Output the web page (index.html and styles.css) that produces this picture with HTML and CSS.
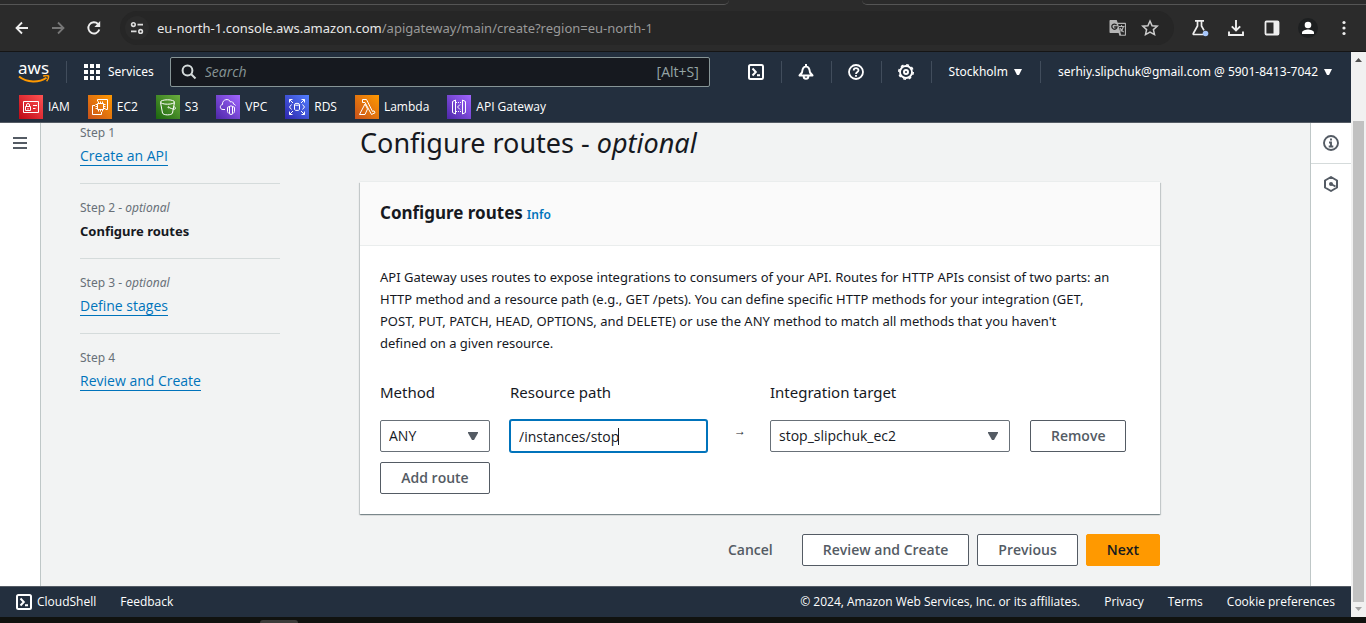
FILE: index.html
```html
<!DOCTYPE html>
<html lang="en">
<head>
<meta charset="utf-8">
<title>API Gateway - Create API</title>
<link rel="stylesheet" href="styles.css">
</head>
<body>
<div class="window">
  <div class="tabstrip">
    <div class="tabstrip-left"></div>
    <div class="tabstrip-right"></div>
  </div>
  <div class="toolbar">
    <div class="toolbar-nav">
      <button class="tool" aria-label="Back"><svg width="16" height="16" viewBox="0 0 16 16"><path d="M14 8H3M8 2.5 2.5 8 8 13.5" fill="none" stroke="#eee" stroke-width="1.8"/></svg></button>
      <button class="tool" aria-label="Forward"><svg width="16" height="16" viewBox="0 0 16 16"><path d="M2 8h11M8 2.5 13.5 8 8 13.5" fill="none" stroke="#777" stroke-width="1.8"/></svg></button>
      <button class="tool" aria-label="Reload"><svg width="16" height="16" viewBox="0 0 16 16"><path d="M13.3 9.5A5.6 5.6 0 1 1 12 4" fill="none" stroke="#eee" stroke-width="1.9"/><path d="M14.2 1v6H8.4z" fill="#eee"/></svg></button>
    </div>
    <div class="omnibox">
      <span class="site-info"><svg width="14" height="14" viewBox="0 0 14 14" fill="none" stroke="#ddd" stroke-width="1.6"><circle cx="3.4" cy="3.6" r="1.8"/><path d="M7.5 3.6H13M1 10.4h5.5"/><circle cx="10.6" cy="10.4" r="1.8"/></svg></span>
      <div class="url">eu-north-1.console.aws.amazon.com<span class="url-path">/apigateway/main/create?region=eu-north-1</span></div>
      <button class="tool" aria-label="Translate"><svg width="18" height="18" viewBox="0 0 18 18"><path d="M1.5 1h6.2l1 2.8H16c.6 0 1 .4 1 1v11c0 .6-.4 1-1 1h-5.6L9.600 14H1.500c-.6 0-1-.4-1-1V2c0-.6.4-1 1-1z" fill="#b4b4b4"/><path d="m9.100 5 3 10.700h3.800V5z" fill="#262626"/><path d="M7.600 6.200A2.600 2.600 0 1 0 8 8H5.200" fill="none" stroke="#262626" stroke-width="1.300"/><path d="M10 7.500h5.500M12.500 6v1.500M14.500 7.500c-.5 2-1.700 3.700-3.200 4.800M11 9c.8 1.700 2 3 3.700 4" fill="none" stroke="#b4b4b4" stroke-width="1.100"/></svg></button>
      <button class="tool" aria-label="Bookmark"><svg width="18" height="18" viewBox="0 0 18 18"><path d="m9 2 2.100 4.700 5.100.5-3.800 3.400 1.100 5L9 13l-4.500 2.600 1.100-5L1.800 7.200l5.100-.5z" fill="none" stroke="#ccc" stroke-width="1.500"/></svg></button>
    </div>
    <div class="toolbar-actions">
      <button class="tool" aria-label="Labs"><svg width="18" height="18" viewBox="0 0 18 18"><path d="M4 1.800h9M6.500 2v5L2.300 14.500c-.3.600 0 1 .600 1H12M10.500 2v5l2.500 4.400" fill="none" stroke="#eee" stroke-width="1.700"/><circle cx="14.500" cy="14.500" r="2.800" fill="#a8c7fa"/></svg></button>
      <button class="tool" aria-label="Downloads"><svg width="18" height="18" viewBox="0 0 18 18" fill="none" stroke="#eee" stroke-width="1.900"><path d="M9 1v10.500M4.800 7.300 9 11.500l4.200-4.200M2 12.500V16h14v-3.500"/></svg></button>
      <button class="tool" aria-label="Side panel"><svg width="18" height="18" viewBox="0 0 18 18"><rect x="2.500" y="2.500" width="13" height="13" rx="1" fill="none" stroke="#eee" stroke-width="1.800"/><path d="M10.500 2h5v14h-5z" fill="#eee"/></svg></button>
      <button class="tool" aria-label="Profile"><svg width="20" height="20" viewBox="0 0 20 20"><circle cx="10" cy="10" r="10" fill="#1d1f20"/><circle cx="10" cy="7" r="3.300" fill="#fff"/><path d="M4 16v-1.500C4 12.500 8 11.500 10 11.500s6 1 6 3V16z" fill="#fff"/></svg></button>
      <button class="tool" aria-label="Menu"><svg width="18" height="18" viewBox="0 0 18 18" fill="#eee"><circle cx="9" cy="3.500" r="1.600"/><circle cx="9" cy="9" r="1.600"/><circle cx="9" cy="14.500" r="1.600"/></svg></button>
    </div>
  </div>

  <div class="viewport">
    <div class="console">
      <header class="header">
        <div class="header-top">
          <a class="logo" href="#" aria-label="AWS home"><span class="logo-text">aws</span><svg width="32" height="8" viewBox="0 0 32 8"><path d="M1 1.500c8 6.400 20 6.400 27.500 1.200" fill="none" stroke="#f90" stroke-width="2"/><path d="M25.200 1.200c2-.8 4.200-.8 5.300-.2.300 1.600-.500 3.700-1.900 5.200" fill="none" stroke="#f90" stroke-width="1.500"/></svg></a>
          <button class="services"><svg width="16" height="16" viewBox="0 0 16 16" fill="#fff"><path d="M0 0h4v4H0zM6 0h4v4H6zM12 0h4v4h-4zM0 6h4v4H0zM6 6h4v4H6zM12 6h4v4h-4zM0 12h4v4H0zM6 12h4v4H6zM12 12h4v4h-4z"/></svg>Services</button>
          <label class="search">
            <svg width="16" height="16" viewBox="0 0 16 16" fill="none" stroke="#d5dbdb" stroke-width="2"><circle cx="6.500" cy="6.500" r="4.900"/><path d="m10 10 4.500 4.500"/></svg>
            <input class="search-input" type="text" placeholder="Search" aria-label="Search">
            <span class="search-key">[Alt+S]</span>
          </label>
          <div class="header-tools">
            <button class="header-icon" aria-label="CloudShell"><svg width="16" height="16" viewBox="0 0 16 16" fill="none" stroke="#fff" stroke-width="2"><rect x="1" y="1" width="14" height="14" rx="1.500"/><path d="m4.500 4.500 3.300 3.500-3.300 3.500M9 11.200h3"/></svg></button>
            <button class="header-icon" aria-label="Notifications"><svg width="16" height="16" viewBox="0 0 16 16" fill="none" stroke="#fff" stroke-width="2" stroke-linejoin="round"><path d="M1.500 11.500h13L12 8.500C11.600 4.500 10.500 2.500 8 2.500S4.400 4.500 4 8.500zM8 0v2.500M5.700 11.500v1a2.300 2.300 0 0 0 4.600 0v-1"/></svg></button>
            <button class="header-icon" aria-label="Support"><svg width="16" height="16" viewBox="0 0 16 16" fill="none" stroke="#fff" stroke-width="1.800"><circle cx="8" cy="8" r="7"/><path d="M5.700 6.500C5.700 3.500 10.500 3.500 10.500 6.300 10.500 8 8 7.900 8 10M8 11v1.800"/></svg></button>
            <button class="header-icon" aria-label="Settings"><svg width="16" height="16" viewBox="0 0 16 16" fill="none" stroke="#fff"><circle cx="8" cy="8" r="6" stroke-width="1.800"/><circle cx="8" cy="8" r="7.200" stroke-width="1.600" stroke-dasharray="2.830 2.825"/><circle cx="8" cy="8" r="2" stroke-width="2"/></svg></button>
            <button class="header-menu">Stockholm<svg width="8" height="6" viewBox="0 0 8 6" fill="#fff"><path d="M0 0h8L5 6H3z"/></svg></button>
            <button class="header-menu">serhiy.slipchuk@gmail.com @ 5901-8413-7042<svg width="8" height="6" viewBox="0 0 8 6" fill="#fff"><path d="M0 0h8L5 6H3z"/></svg></button>
          </div>
        </div>
        <svg class="defs" width="0" height="0" aria-hidden="true"><defs>
          <linearGradient id="g-red" x1="0" y1="1" x2="1" y2="0"><stop stop-color="#bd0816"/><stop offset="1" stop-color="#ff5252"/></linearGradient>
          <linearGradient id="g-orange" x1="0" y1="1" x2="1" y2="0"><stop stop-color="#c8511b"/><stop offset="1" stop-color="#f90"/></linearGradient>
          <linearGradient id="g-green" x1="0" y1="1" x2="1" y2="0"><stop stop-color="#1b660f"/><stop offset="1" stop-color="#6cae3e"/></linearGradient>
          <linearGradient id="g-purple" x1="0" y1="1" x2="1" y2="0"><stop stop-color="#4d27a8"/><stop offset="1" stop-color="#a166ff"/></linearGradient>
          <linearGradient id="g-blue" x1="0" y1="1" x2="1" y2="0"><stop stop-color="#2e27ad"/><stop offset="1" stop-color="#527fff"/></linearGradient>
        </defs></svg>
        <nav class="favorites" aria-label="Favorites">
          <a class="favorite" href="#"><svg width="24" height="24" viewBox="0 0 24 24" fill="none" stroke="#fff"><path d="M0 0h24v24H0z" fill="url(#g-red)" stroke="none"/><path d="M4.500 6.500h15v11h-15zM6.500 11.500h5v4h-5zM7.500 11.500V10a1.500 1.500 0 0 1 3 0v1.500M9 13v1.500M14 10.500h4M14 13.500h2.500"/></svg>IAM</a>
          <a class="favorite" href="#"><svg width="24" height="24" viewBox="0 0 24 24" fill="none" stroke="#fff"><path d="M0 0h24v24H0z" fill="url(#g-orange)" stroke="none"/><path d="M9.500 8.500h6v6h-6zM10.500 6.500v2M12.500 6.500v2M14.500 6.500v2M10.500 14.500v2M12.500 14.500v2M14.500 14.500v2M7.500 9.500h2M7.500 11.500h2M7.500 13.500h2M15.500 9.500h2M15.500 11.500h2M15.500 13.500h2M9.500 6.500v-2h10v10h-2M7 10.500H4.500v9h9V17"/></svg>EC2</a>
          <a class="favorite" href="#"><svg width="24" height="24" viewBox="0 0 24 24" fill="none" stroke="#fff"><path d="M0 0h24v24H0z" fill="url(#g-green)" stroke="none"/><path d="M4.500 7.500 6.500 18c.5 2.500 9.500 2.500 10 0l2-10.500M13 12.500c3 1.500 6.500 2.500 6.500.8 0-.8-1-1.600-2-2"/><ellipse cx="11.500" cy="7" rx="7" ry="2.200"/><circle cx="12.500" cy="12.300" r=".6"/></svg>S3</a>
          <a class="favorite" href="#"><svg width="24" height="24" viewBox="0 0 24 24" fill="none" stroke="#fff"><path d="M0 0h24v24H0z" fill="url(#g-purple)" stroke="none"/><path d="M9 14.500H7C3.500 14.500 3.500 10 6.500 9.500 6 4 13 3 14.500 7c1.500-.8 3 .3 3 2 1 .2 1.800.8 2 1.500M11.500 12.300l3.500-1.500 3.500 1.500v4c0 1.500-2 2.700-3.500 3.200-1.500-.5-3.500-1.700-3.500-3.200zM13.500 12v6.500M16.500 12v6.500"/></svg>VPC</a>
          <a class="favorite" href="#"><svg width="24" height="24" viewBox="0 0 24 24" fill="none" stroke="#fff"><path d="M0 0h24v24H0z" fill="url(#g-blue)" stroke="none"/><path d="M4.500 7.500v-3h3M4.500 4.500 8 8M16.500 4.500h3v3M19.500 4.500 16 8M4.500 16.500v3h3M4.500 19.500 8 16M19.500 16.500v3h-3M19.500 19.500 16 16M9.500 9.500v5c0 1.300 5 1.300 5 0v-5M6.500 9.500l-2 2.500 2 2.500M17.500 9.500l2 2.500-2 2.500"/><ellipse cx="12" cy="9.300" rx="2.500" ry="1"/></svg>RDS</a>
          <a class="favorite" href="#"><svg width="24" height="24" viewBox="0 0 24 24" fill="none" stroke="#fff"><path d="M0 0h24v24H0z" fill="url(#g-orange)" stroke="none"/><path d="M4.500 19.500 10 9l2.500 5-2.500 5.500zM7.500 4.500h4l6 12 1.500-.7 1 2-3.500 1.700-6.500-12H7.500z"/></svg>Lambda</a>
          <a class="favorite" href="#"><svg width="24" height="24" viewBox="0 0 24 24" fill="none" stroke="#fff"><path d="M0 0h24v24H0z" fill="url(#g-purple)" stroke="none"/><path d="M5.500 6.500 8.500 5v14l-3-1.500zM18.500 6.500l-3-1.500v14l3-1.500zM13 9.500 10.500 12l2.500 2.500"/><path d="M9 7.500h6.500M9 16.500h6.500" stroke-dasharray="1 1"/></svg>API Gateway</a>
        </nav>
      </header>

      <div class="workspace">
        <aside class="rail rail-left">
          <button class="rail-button" aria-label="Open navigation"><svg width="14" height="14" viewBox="0 0 14 14" fill="#545b64"><path d="M0 1h14v2H0zM0 6h14v2H0zM0 11h14v2H0z"/></svg></button>
        </aside>
        <main class="main">
          <ol class="steps">
            <li class="step"><span class="step-label">Step 1</span><a class="step-link" href="#">Create an API</a></li>
            <li class="step"><span class="step-label">Step 2 - <i>optional</i></span><b class="step-current">Configure routes</b></li>
            <li class="step"><span class="step-label">Step 3 - <i>optional</i></span><a class="step-link" href="#">Define stages</a></li>
            <li class="step"><span class="step-label">Step 4</span><a class="step-link" href="#">Review and Create</a></li>
          </ol>
          <form class="content">
            <h1 class="title">Configure routes - <i>optional</i></h1>
            <section class="card">
              <div class="card-header">
                <h2 class="card-title">Configure routes</h2>
                <a class="info" href="#">Info</a>
              </div>
              <div class="card-body">
                <p class="description">API Gateway uses routes to expose integrations to consumers of your API. Routes for HTTP APIs consist of two parts: an HTTP method and a resource path (e.g., GET /pets). You can define specific HTTP methods for your integration (GET, POST, PUT, PATCH, HEAD, OPTIONS, and DELETE) or use the ANY method to match all methods that you haven't<br>defined on a given resource.</p>
                <div class="route">
                  <label class="label" for="method">Method</label>
                  <label class="label label-path" for="path">Resource path</label>
                  <label class="label" for="target">Integration target</label>
                  <span></span>
                  <div class="select-box">
                    <select class="select" id="method"><option>ANY</option></select>
                    <svg class="select-caret" width="10" height="8" viewBox="0 0 10 8" fill="#545b64"><path d="M0 0h10v1L6 8H4L0 1z"/></svg>
                  </div>
                  <div class="path-box">
                    <input class="path" id="path" type="text" value="/instances/stop">
                    <span class="text-cursor"></span>
                  </div>
                  <span class="arrow">→</span>
                  <div class="select-box">
                    <select class="select" id="target"><option>stop_slipchuk_ec2</option></select>
                    <svg class="select-caret" width="10" height="8" viewBox="0 0 10 8" fill="#545b64"><path d="M0 0h10v1L6 8H4L0 1z"/></svg>
                  </div>
                  <button class="button" type="button">Remove</button>
                  <button class="button" type="button">Add route</button>
                </div>
              </div>
            </section>
            <div class="actions">
              <button class="button button-link" type="button">Cancel</button>
              <button class="button" type="button">Review and Create</button>
              <button class="button" type="button">Previous</button>
              <button class="button button-primary" type="button">Next</button>
            </div>
          </form>
        </main>
        <aside class="rail rail-right">
          <button class="rail-button" aria-label="Info panel"><svg width="16" height="16" viewBox="0 0 16 16" fill="none" stroke="#545b64" stroke-width="1.900"><circle cx="8" cy="8" r="7"/><path d="M8 3.500v2M6 7.500h2v4M5.700 11.500h4.600"/></svg></button>
          <button class="rail-button" aria-label="Tutorials panel"><svg width="16" height="16" viewBox="0 0 16 16" fill="none" stroke="#545b64" stroke-width="2"><path d="m8 1 6 3.500v7L8 15l-6-3.500v-7z" stroke-linejoin="round"/><circle cx="8" cy="8" r="2" fill="#545b64" stroke="none"/><path d="m8 8 4.500 2.500"/></svg></button>
        </aside>
      </div>

      <footer class="footer">
        <button class="footer-item"><svg width="16" height="16" viewBox="0 0 16 16" fill="none" stroke="#fff" stroke-width="2"><rect x="1" y="1" width="14" height="14" rx="1.500"/><path d="m4.500 4.500 3.300 3.500-3.300 3.500M9 11.200h3"/></svg>CloudShell</button>
        <a class="footer-item" href="#">Feedback</a>
        <span class="copyright">© 2024, Amazon Web Services, Inc. or its affiliates.</span>
        <a class="footer-item" href="#">Privacy</a>
        <a class="footer-item" href="#">Terms</a>
        <a class="footer-item" href="#">Cookie preferences</a>
      </footer>
    </div>
    <div class="scrollbar">
      <svg width="15" height="15" viewBox="0 0 15 15" fill="#505050"><path d="M4 10h7L7.500 6z"/></svg>
      <div class="scroll-thumb"></div>
      <svg width="15" height="15" viewBox="0 0 15 15" fill="#a3a3a3"><path d="M4 5h7L7.500 9z"/></svg>
    </div>
  </div>
  <div class="dock"><div class="dock-handle"></div></div>
</div>
</body>
</html>
```
FILE: styles.css
```css
* { box-sizing: border-box; }
body { margin: 0; background: #10120f; font-family: "Open Sans", "Noto Sans", sans-serif; font-size: 14px; line-height: 22px; color: #16191f; }
button, input, select { font: inherit; color: inherit; margin: 0; }
button { padding: 0; border: 0; background: none; }
a { color: inherit; text-decoration: none; }
svg { display: block; flex: none; }
.defs { position: absolute; }

.url, .header, .step-label, .step-current, .title, .card-header, .description, .label { font-family: "Noto Sans", "Open Sans", sans-serif; }

.window { display: flex; flex-direction: column; min-height: 100vh; }

/* Browser frame */
.tabstrip { display: flex; justify-content: space-between; height: 5px; background: #2b2b2b; }
.tabstrip-left { width: 729px; border-bottom: 1px solid #555; border-bottom-right-radius: 6px; }
.tabstrip-right { width: 504px; border-bottom: 1px solid #555; border-bottom-left-radius: 6px; }
.toolbar { display: flex; align-items: center; height: 47px; padding: 0 13px; background: #2b2b2b; border-bottom: 1px solid #151515; }
.toolbar-nav { display: flex; gap: 18px; margin-right: 17px; }
.tool { display: flex; align-items: center; justify-content: center; width: 18px; height: 20px; }
.omnibox { display: flex; align-items: center; flex: 1; height: 34px; padding: 0 15px 0 5px; gap: 14px; border-radius: 17px; background: #262626; }
.site-info { display: flex; align-items: center; justify-content: center; width: 24px; height: 24px; border-radius: 12px; background: #2b2b2b; margin-right: -6px; }
.url { flex: 1; font-size: 13px; color: #e8e8e8; white-space: nowrap; }
.url-path { color: #999; }
.toolbar-actions { display: flex; gap: 18px; margin-left: 17px; }

/* Page area */
.viewport { display: flex; flex: 1; }
.console { display: flex; flex-direction: column; flex: 1; }
.header { background: #232f3e; color: #fff; border-bottom: 1px solid #545b64; font-size: 12px; line-height: 20px; }
.header-top { display: flex; align-items: center; height: 40px; padding-left: 18px; }
.logo { display: flex; flex-direction: column; padding-right: 16px; border-right: 1px solid #414d5c; }
.logo-text { font-size: 17px; line-height: 14px; }
.services { display: flex; align-items: center; gap: 8px; padding: 0 16px 0 17px; }
.search { display: flex; align-items: center; width: 540px; height: 30px; padding: 0 10px; gap: 8px; border: 1px solid #879596; border-radius: 2px; background: #16191f; color: #95a5a6; font-family: "Open Sans", sans-serif; font-size: 14px; }
.search-input { flex: 1; min-width: 0; padding: 0; border: 0; outline: 0; background: none; }
.search-input::placeholder { color: #879596; font-style: italic; opacity: 1; }
.header-tools { display: flex; align-items: center; margin-left: auto; }
.header-icon { display: flex; align-items: center; justify-content: center; width: 50px; height: 22px; border-right: 1px solid #414d5c; }
.header-menu { display: flex; align-items: center; gap: 6px; height: 22px; padding: 0 18px 0 17px; }
.header-menu + .header-menu { padding-right: 19px; border-left: 1px solid #414d5c; }
.favorites { display: flex; align-items: center; gap: 18px; height: 30px; padding-left: 19px; font-family: "Open Sans", "Noto Sans", sans-serif; }
.favorite { display: flex; align-items: center; gap: 5px; }

.workspace { display: flex; flex: 1; }
.rail { display: flex; flex-direction: column; width: 41px; background: #fff; }
.rail-left { border-right: 1px solid #bfc7c7; }
.rail-right { border-left: 1px solid #bfc7c7; }
.rail-button { display: flex; align-items: center; justify-content: center; height: 40px; }
.rail-right .rail-button + .rail-button { height: 41px; border-top: 1px solid #d5dbdb; }
.main { display: flex; flex: 1; align-items: flex-start; gap: 80px; padding: 0 39px 16px; background: #f2f3f3; }

.steps { width: 200px; margin: 0; padding: 0; list-style: none; }
.step { display: flex; flex-direction: column; align-items: flex-start; gap: 2px; padding: 14px 0 16px; }
.step + .step { border-top: 1px solid #d5dbdb; }
.step:first-child { padding-top: 0; }
.step-label { font-size: 12px; line-height: 20px; color: #687078; }
.step-link { padding-top: 2px; line-height: 18px; color: #0073bb; border-bottom: 1px solid #0073bb; margin-bottom: 1px; }
.step-current { font-size: 13px; font-weight: 700; }

.content { width: 800px; }
.title { margin: 0; padding: 2px 0 21px; font-size: 27px; line-height: 36px; font-weight: 400; }
.card { background: #fff; box-shadow: 0 1px 1px 0 #001c244d, 1px 1px 1px 0 #001c2426, -1px 1px 1px 0 #001c2426, 0 -1px 0 0 #eaeded; }
.card-header { display: flex; align-items: baseline; gap: 4px; padding: 20px 20px 21px; background: #fafafa; border-bottom: 1px solid #eaeded; }
.card-title { margin: 0; font-size: 17px; line-height: 22px; font-weight: 700; }
.info { font-size: 12px; line-height: 16px; font-weight: 600; color: #0073bb; }
.card-body { padding: 20px; }
.description { margin: 0 0 27px; padding-right: 25px; font-size: 13px; }
.route { display: grid; grid-template-columns: 110px 200px 20px 240px auto; column-gap: 20px; row-gap: 10px; justify-content: start; }
.label { padding-bottom: 7px; font-size: 15px; }
.label-path { grid-column: span 2; }
.select-box, .path-box { display: grid; align-items: center; }
.select { grid-area: 1 / 1; appearance: none; width: 100%; height: 32px; padding: 0 8px; border: 1px solid #687078; border-radius: 2px; background: #fff; }
.select-caret { grid-area: 1 / 1; justify-self: end; margin-right: 12px; pointer-events: none; }
.path { grid-area: 1 / 1; width: 197px; height: 32px; padding: 0 8px; border: 1px solid #0073bb; border-radius: 2px; outline: 0; box-shadow: 0 0 0 1px #0073bb; }
.text-cursor { grid-area: 1 / 1; width: 1px; height: 17px; margin-left: 108px; background: #16191f; }
.arrow { text-align: center; font-size: 12px; }
.button { height: 32px; padding: 0 20px; border: 1px solid #545b64; border-radius: 2px; background: #fff; color: #545b64; font-weight: 600; white-space: nowrap; }
.button-link { border-color: transparent; background: none; }
.button-primary { border-color: #f90; background: #f90; color: #16191f; }
.actions { display: flex; justify-content: flex-end; gap: 8px; margin-top: 20px; }

.footer { display: flex; align-items: center; gap: 24px; height: 31px; padding: 0 16px; background: #232f3e; border-top: 1px solid #545b64; color: #fff; font-size: 12px; }
.footer-item { display: flex; align-items: center; gap: 5px; }
.copyright { margin-left: auto; }

.scrollbar { display: flex; flex-direction: column; width: 15px; background: #f1f1f1; }
.scroll-thumb { flex: 1; margin: 54px 2px 0; background: #c1c1c1; }
.dock { height: 6px; padding: 3px 0 0 260px; background: #10120f; }
.dock-handle { width: 38px; height: 3px; border-radius: 3px 3px 0 0; background: #3c3c3a; }
```
